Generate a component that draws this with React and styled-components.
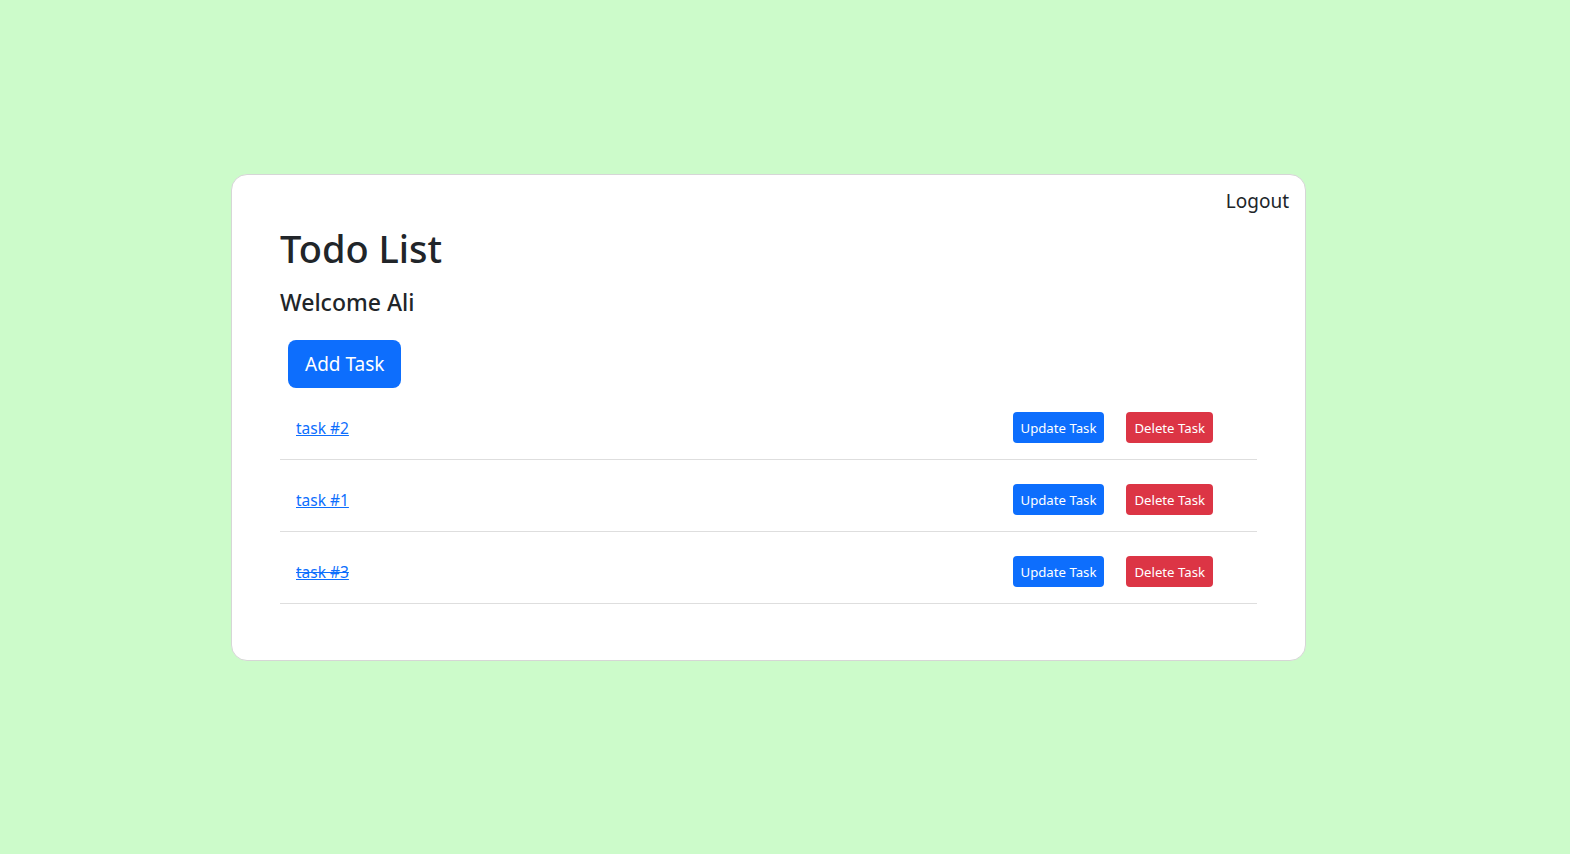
import styled, { createGlobalStyle } from 'styled-components';

const GlobalStyle = createGlobalStyle`
  html, body {
    margin: 0;
    padding: 0;
    background-color: #ccfbca;
    font-family: "Noto Sans", "Liberation Sans", sans-serif;
    color: #212529;
  }
`;

const Page = styled.div`
  min-height: 854px;
  display: flex;
  justify-content: center;
  align-items: flex-start;
  padding: 174px 33px 0 0;
  box-sizing: border-box;
`;

const Card = styled.div`
  width: 1075px;
  flex-shrink: 0;
  box-sizing: border-box;
  background-color: #fff;
  border: 1px solid #d6d6d6;
  border-radius: 16px;
  padding: 0 48px 56px 48px;
`;

const TopBar = styled.div`
  display: flex;
  justify-content: flex-end;
  margin-right: -32px;
  padding-top: 12px;
`;

const LogoutLink = styled.a`
  font-size: 19px;
  line-height: 28px;
  color: #212529;
  cursor: pointer;
`;

const Title = styled.h1`
  margin: 9px 0 0 0;
  font-size: 38px;
  font-weight: 500;
  line-height: 48px;
`;

const Welcome = styled.h3`
  margin: 14px 0 0 0;
  font-size: 23px;
  font-weight: 500;
  line-height: 32px;
`;

const Button = styled.button`
  border: none;
  color: #fff;
  font-family: inherit;
  cursor: pointer;
  background-color: ${(props) => (props.$variant === 'danger' ? '#dc3545' : '#0d6efd')};
  font-size: ${(props) => (props.$size === 'lg' ? '19px' : '13.2px')};
  padding: ${(props) => (props.$size === 'lg' ? '0 17px' : '0 8px')};
  height: ${(props) => (props.$size === 'lg' ? '48px' : '31px')};
  border-radius: ${(props) => (props.$size === 'lg' ? '8px' : '4px')};
`;

const AddWrap = styled.div`
  margin: 22px 0 0 8px;
`;

const TaskList = styled.div`
  display: flex;
  flex-direction: column;
`;

const TaskRow = styled.div`
  display: flex;
  align-items: center;
  padding: 24px 44px 16px 16px;
  border-bottom: 1px solid #dedede;
`;

const TaskLink = styled.a`
  flex: 1;
  font-size: 15.5px;
  color: #0d6efd;
  text-decoration: ${(props) => (props.$done ? 'underline line-through' : 'underline')};
  cursor: pointer;
`;

const Actions = styled.div`
  display: flex;
  gap: 22px;
`;

const tasks = [
  { id: 2, name: 'task #2', done: false },
  { id: 1, name: 'task #1', done: false },
  { id: 3, name: 'task #3', done: true }
];

export default function App() {
  return (
    <>
      <GlobalStyle />
      <Page>
        <Card>
          <TopBar>
            <LogoutLink>Logout</LogoutLink>
          </TopBar>
          <Title>Todo List</Title>
          <Welcome>Welcome Ali</Welcome>
          <AddWrap>
            <Button $size="lg">Add Task</Button>
          </AddWrap>
          <TaskList>
            {tasks.map((task) => (
              <TaskRow key={task.id}>
                <TaskLink $done={task.done}>{task.name}</TaskLink>
                <Actions>
                  <Button>Update Task</Button>
                  <Button $variant="danger">Delete Task</Button>
                </Actions>
              </TaskRow>
            ))}
          </TaskList>
        </Card>
      </Page>
    </>
  );
}
